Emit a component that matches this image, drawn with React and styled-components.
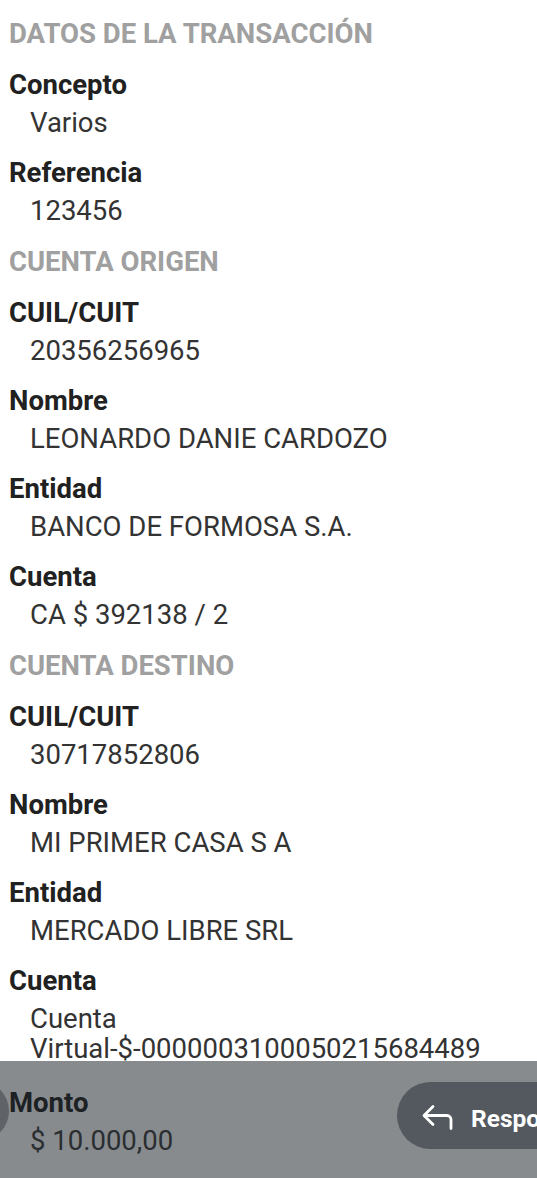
import React from 'react';
import styled, { createGlobalStyle } from 'styled-components';

const GlobalStyle = createGlobalStyle`
    html, body {
        margin: 0;
        padding: 0;
        background: #ffffff;
    }
    body {
        font-family: Roboto, "Liberation Sans", sans-serif;
    }
`;

const sections = [
    {
        title: 'DATOS DE LA TRANSACCIÓN',
        fields: [
            { label: 'Concepto', value: 'Varios' },
            { label: 'Referencia', value: '123456' },
        ],
    },
    {
        title: 'CUENTA ORIGEN',
        fields: [
            { label: 'CUIL/CUIT', value: '20356256965' },
            { label: 'Nombre', value: 'LEONARDO DANIE CARDOZO' },
            { label: 'Entidad', value: 'BANCO DE FORMOSA S.A.' },
            { label: 'Cuenta', value: 'CA $ 392138 / 2' },
        ],
    },
    {
        title: 'CUENTA DESTINO',
        fields: [
            { label: 'CUIL/CUIT', value: '30717852806' },
            { label: 'Nombre', value: 'MI PRIMER CASA S A' },
            { label: 'Entidad', value: 'MERCADO LIBRE SRL' },
            { label: 'Cuenta', value: 'Cuenta Virtual-$-0000003100050215684489' },
        ],
    },
];

// flecha de "responder": punta a la izquierda, trazo que baja a la derecha
function ReplyIcon() {
    return (
        <svg width="32" height="28" viewBox="0 0 32 28" fill="none">
            <path d="M11 4.5 L2 13.5 L11 22.5" stroke="#fff" strokeWidth="2.8" strokeLinecap="round" strokeLinejoin="round" />
            <path d="M2.5 13.5 H25 A4 4 0 0 1 29 17.5 V26.5" stroke="#fff" strokeWidth="2.8" strokeLinecap="round" />
        </svg>
    );
}

function Field({ label, value, dim }) {
    return (
        <FieldBox>
            <Label dim={dim}>{label}</Label>
            <Value dim={dim}>{value}</Value>
        </FieldBox>
    );
}

export default function App() {
    return (
        <>
            <GlobalStyle />
            <Screen>
                <Content>
                    {sections.map((s) => (
                        <Section key={s.title}>
                            <SectionTitle>{s.title}</SectionTitle>
                            {s.fields.map((f, i) => (
                                <Field key={s.title + i} label={f.label} value={f.value} />
                            ))}
                        </Section>
                    ))}
                </Content>
                <Scrim>
                    <Field dim label="Monto" value="$ 10.000,00" />
                    <SideButton />
                    <ReplyButton>
                        <ReplyIcon />
                        <ReplyText>Responder</ReplyText>
                    </ReplyButton>
                </Scrim>
            </Screen>
        </>
    );
}

const Screen = styled.div`
    position: relative;
    width: 537px;
    height: 1178px;
    overflow: hidden;
    background: #ffffff;
`;

const Content = styled.div`
    display: flex;
    flex-direction: column;
    padding: 18px 0 0 9px;
`;

const Section = styled.div`
    display: flex;
    flex-direction: column;
    gap: 19px;
    margin-bottom: 20px;
`;

const SectionTitle = styled.div`
    color: #a0a0a0;
    font-size: 27.5px;
    font-weight: 700;
    line-height: 32px;
`;

const FieldBox = styled.div`
    display: flex;
    flex-direction: column;
    gap: 7px;
`;

const Label = styled.div`
    color: ${(p) => (p.dim ? '#1d2124' : '#212121')};
    font-size: 27.5px;
    font-weight: 700;
    line-height: 32px;
`;

const Value = styled.div`
    padding: 0 20px 0 21px;
    color: ${(p) => (p.dim ? '#2a2e31' : '#333333')};
    font-size: 27.5px;
    font-weight: 400;
    line-height: 30px;
    word-break: break-word;
`;

const Scrim = styled.div`
    position: absolute;
    left: 0;
    right: 0;
    bottom: 0;
    height: 117px;
    display: flex;
    align-items: flex-start;
    padding: 26px 0 0 9px;
    box-sizing: border-box;
    background: #878b8e;
`;

const SideButton = styled.div`
    position: absolute;
    left: -51px;
    top: 20px;
    width: 60px;
    height: 60px;
    border-radius: 50%;
    background: #5f6368;
`;

const ReplyButton = styled.div`
    position: absolute;
    left: 397px;
    top: 21px;
    height: 67px;
    padding: 0 28px 0 25px;
    display: flex;
    align-items: center;
    gap: 17px;
    border-radius: 34px;
    background: #53595e;
`;

const ReplyText = styled.span`
    padding-top: 5px;
    color: #ffffff;
    font-size: 24.5px;
    font-weight: 700;
    white-space: nowrap;
`;
